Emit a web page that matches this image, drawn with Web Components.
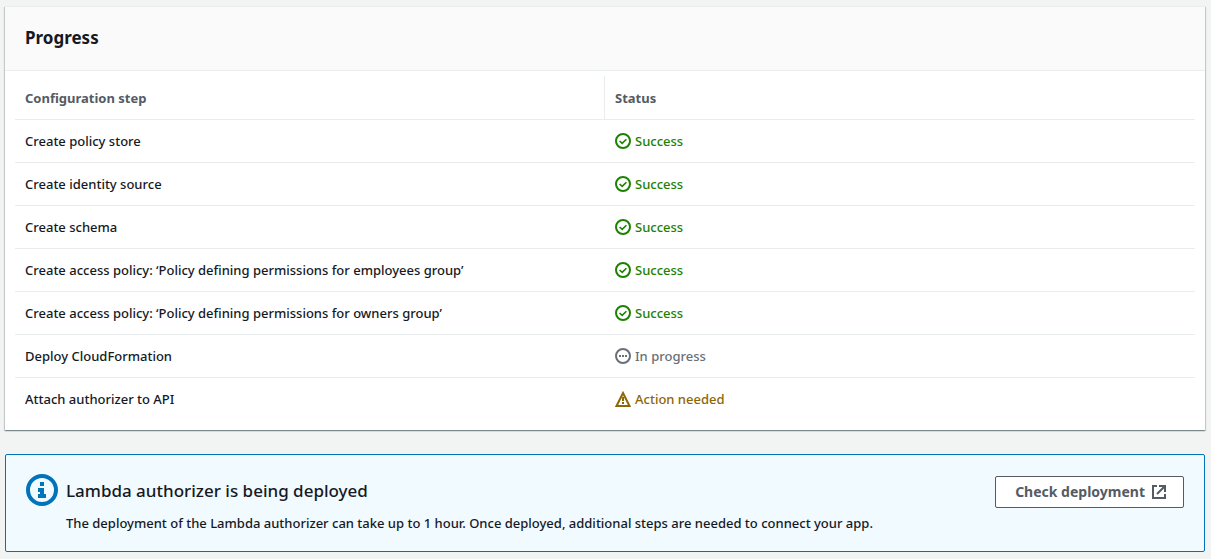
<!DOCTYPE html>
<html lang="en">
<head>
<meta charset="utf-8">
<meta name="viewport" content="width=device-width, initial-scale=1">
<title>Progress</title>
<style>
  body {
    margin: 0;
    padding: 6px 6px 7px 5px;
    background: #f2f3f3;
    color: #16191f;
    font: 500 13px/22px "Noto Sans", "Open Sans", sans-serif;
  }
  main { display: flex; flex-direction: column; gap: 24px; }
</style>
</head>
<body>
<main>
  <panel-card>
    <span slot="header">Progress</span>
    <progress-table></progress-table>
  </panel-card>
  <flash-message>
    <span slot="title">Lambda authorizer is being deployed</span>
    The deployment of the Lambda authorizer can take up to 1 hour. Once deployed, additional steps are needed to connect your app.
    <external-button slot="action">Check deployment</external-button>
  </flash-message>
</main>

<script>
const define = (name, html) => {
  customElements.define(name, class extends HTMLElement {
    constructor() {
      super();
      this.attachShadow({ mode: 'open' }).innerHTML = html;
    }
  });
};

define('panel-card', `
  <style>
    :host {
      display: block;
      background: #fff;
      border-top: 1px solid #eaeded;
      box-shadow: 0 1px 1px 0 rgba(0,28,36,.3), 1px 1px 1px 0 rgba(0,28,36,.15), -1px 1px 1px 0 rgba(0,28,36,.15);
    }
    header { padding: 20px 20px 21px; background: #fafafa; border-bottom: 1px solid #eaeded; }
    h2 { margin: 0; font-size: 17px; line-height: 22px; font-weight: 700; }
    .body { padding: 5px 10px 10px; }
  </style>
  <header><h2><slot name="header"></slot></h2></header>
  <div class="body"><slot></slot></div>`);

const ICONS = {
  success: '<circle cx="8" cy="8" r="7"/><path d="m4.6 8 2.6 2.4 4.2-4.2" stroke-width="1.6"/>',
  progress: '<circle cx="8" cy="8" r="7"/><path d="M4 8h2M7 8h2M10 8h2"/>',
  warning: '<path d="M8 2 14.5 15H1.5Z"/><path d="M8 6v4M8 11v2"/>'
};

customElements.define('status-indicator', class extends HTMLElement {
  constructor() {
    super();
    this.attachShadow({ mode: 'open' });
  }
  connectedCallback() {
    this.shadowRoot.innerHTML = `
      <style>
        :host { display: flex; align-items: center; gap: 4px; color: #1d8102; }
        :host([type="progress"]) { color: #687078; }
        :host([type="warning"]) { color: #8d6605; }
        svg { width: 16px; height: 16px; fill: none; stroke: currentColor; stroke-width: 2; }
      </style>
      <svg viewBox="0 0 16 16" aria-hidden="true">${ICONS[this.getAttribute('type')]}</svg>
      <slot></slot>`;
  }
});

const STEPS = [
  ['Create policy store', 'success', 'Success'],
  ['Create identity source', 'success', 'Success'],
  ['Create schema', 'success', 'Success'],
  ['Create access policy: ‘Policy defining permissions for employees group’', 'success', 'Success'],
  ['Create access policy: ‘Policy defining permissions for owners group’', 'success', 'Success'],
  ['Deploy CloudFormation', 'progress', 'In progress'],
  ['Attach authorizer to API', 'warning', 'Action needed']
];

define('progress-table', `
  <style>
    :host { display: block; }
    table { width: 100%; border-collapse: separate; border-spacing: 0; table-layout: fixed; }
    th, td { padding: 10px; text-align: left; font-weight: inherit; border-bottom: 1px solid #eaeded; }
    thead th { padding: 11px 10px 10px; color: #545b64; font-weight: 700; }
    thead th:first-child { border-right: 1px solid #eaeded; }
    tbody tr:last-child > * { border-bottom: 0; }
  </style>
  <table>
    <thead><tr><th scope="col">Configuration step</th><th scope="col">Status</th></tr></thead>
    <tbody>${STEPS.map(([step, type, label]) =>
      `<tr><th scope="row">${step}</th><td><status-indicator type="${type}">${label}</status-indicator></td></tr>`).join('')}
    </tbody>
  </table>`);

define('external-button', `
  <style>
    :host { display: block; }
    button {
      display: flex; align-items: center; gap: 6px;
      padding: 4px 16px 4px 19px;
      border: 1px solid #545b64; border-radius: 2px;
      background: #fff; color: #545b64;
      font: inherit; font-size: 14px; font-weight: 700; white-space: nowrap; cursor: pointer;
    }
    svg { width: 16px; height: 16px; fill: none; stroke: currentColor; stroke-width: 2; }
  </style>
  <button type="button"><slot></slot>
    <svg viewBox="0 0 16 16" aria-hidden="true"><path d="M6 2H2v12h12V10"/><path d="M8 2h6v6M14 2 6 10"/></svg>
  </button>`);

define('flash-message', `
  <style>
    :host {
      display: flex; align-items: flex-start; gap: 8px;
      padding: 19px 20px 17px;
      border: 1px solid #0073bb; border-radius: 2px;
      background: #f1faff;
    }
    svg { flex: none; width: 32px; height: 32px; }
    .text { flex: 1; min-width: 0; }
    h3 { margin: 0 0 4px; font-size: 17px; line-height: 34px; font-weight: 500; }
    slot[name="action"] { display: block; padding-top: 2px; }
  </style>
  <svg viewBox="0 0 32 32" aria-hidden="true">
    <circle cx="16" cy="16" r="14" fill="none" stroke="#0073bb" stroke-width="4"/>
    <path fill="#0073bb" d="M14 8h4v4h-4zM12 14h6v6h2v4h-8v-4h2v-2h-2z"/>
  </svg>
  <div class="text"><h3><slot name="title"></slot></h3><div><slot></slot></div></div>
  <slot name="action"></slot>`);
</script>
</body>
</html>
